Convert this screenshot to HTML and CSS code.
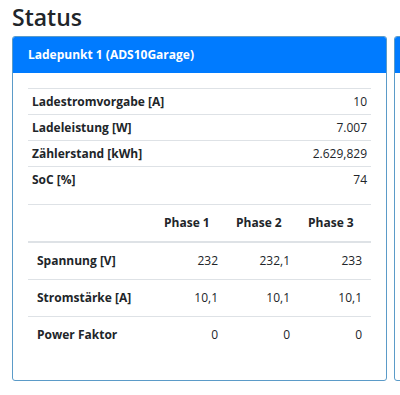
FILE: index.html
```html
<!DOCTYPE html>
<html lang="de">
<head>
    <meta charset="UTF-8">
    <meta name="viewport" content="width=device-width, initial-scale=1.0">
    <title>Status</title>
    <link rel="stylesheet" href="styles.css">
</head>
<body>
    <h2 class="titel">Status</h2>
    <div class="karten">
        <section class="karte">
            <div class="karte-kopf">Ladepunkt 1 (ADS10Garage)</div>
            <div class="karte-body">
                <table class="tabelle klein">
                    <tbody>
                        <tr><th>Ladestromvorgabe [A]</th><td>10</td></tr>
                        <tr><th>Ladeleistung [W]</th><td>7.007</td></tr>
                        <tr><th>Zählerstand [kWh]</th><td>2.629,829</td></tr>
                        <tr><th>SoC [%]</th><td>74</td></tr>
                    </tbody>
                </table>
                <table class="tabelle phasen">
                    <thead>
                        <tr>
                            <th class="col-name"></th>
                            <th class="col-phase">Phase 1</th>
                            <th class="col-phase">Phase 2</th>
                            <th class="col-phase">Phase 3</th>
                        </tr>
                    </thead>
                    <tbody>
                        <tr><th>Spannung [V]</th><td>232</td><td>232,1</td><td>233</td></tr>
                        <tr><th>Stromstärke [A]</th><td>10,1</td><td>10,1</td><td>10,1</td></tr>
                        <tr><th>Power Faktor</th><td>0</td><td>0</td><td>0</td></tr>
                    </tbody>
                </table>
            </div>
        </section>
        <!-- naechster Ladepunkt, nur angeschnitten sichtbar -->
        <section class="karte">
            <div class="karte-kopf">&nbsp;</div>
            <div class="karte-body"></div>
        </section>
    </div>
</body>
</html>
```

FILE: styles.css
```css
*{
    margin: 0;
    padding: 0;
    box-sizing: border-box;
}
body{
    font-family: "Open Sans", "Noto Sans", Arial, sans-serif;
    font-size: 12px;
    line-height: 18px;
    color: #212529;
    background-color: #fff;
    padding: 0 12px;
    overflow: hidden;
}
.titel{
    font-size: 23px;
    font-weight: 600;
    line-height: 28px;
    padding-top: 3px;
    margin-bottom: 5px;
}
.karten{
    display: flex;
    gap: 7px;
}
.karte{
    flex: 0 0 375px;
    border: 1px solid #5b9bc8;
    border-radius: 3px;
}
.karte-kopf{
    background-color: #007bff;
    color: #fff;
    font-weight: 700;
    padding: 9px 15px;
    border-radius: 2px 2px 0 0;
}
.karte-body{
    padding: 15px;
}
.tabelle{
    width: 100%;
    border-collapse: collapse;
    margin-bottom: 12px;
}
.tabelle th,
.tabelle td{
    border-top: 1px solid #dee2e6;
    vertical-align: top;
}
.tabelle th{
    text-align: left;
    font-weight: 700;
}
.tabelle td{
    text-align: right;
}
.klein th,
.klein td{
    padding: 3.5px 4px;
}
.phasen th,
.phasen td{
    padding: 9px;
}
.phasen thead th{
    border-bottom: 2px solid #dee2e6;
}
.col-phase{
    width: 72px;
}
```
